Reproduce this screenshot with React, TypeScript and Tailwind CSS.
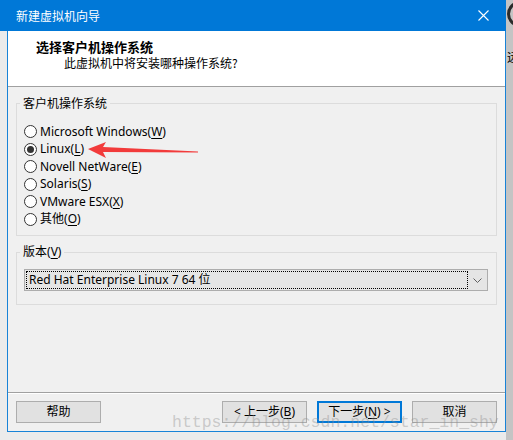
import { ReactNode } from "react";

const osList = [
  { label: "Microsoft Windows", key: "W" },
  { label: "Linux", key: "L", checked: true },
  { label: "Novell NetWare", key: "E" },
  { label: "Solaris", key: "S" },
  { label: "VMware ESX", key: "X" },
  { label: "其他", key: "O" },
];

//label with underlined access key, e.g. Linux(L)
function Mnemonic({ text, k }: { text: string; k: string }) {
  return (
    <span>
      {text}(<span className="underline underline-offset-2">{k}</span>)
    </span>
  );
}

function Radio({ label, k, checked }: { label: string; k: string; checked?: boolean }) {
  return (
    <div className="flex items-center h-[17.5px]">
      <span className="w-[13px] h-[13px] rounded-full border border-[#333] bg-white flex items-center justify-center">
        {checked && <span className="w-[7px] h-[7px] rounded-full bg-[#333]" />}
      </span>
      <span className="ml-[3px]">
        <Mnemonic text={label} k={k} />
      </span>
    </div>
  );
}

function Button({ children, primary }: { children: ReactNode; primary?: boolean }) {
  return (
    <button
      className={
        primary
          ? "w-[85px] h-[22px] bg-[#e1e1e1] border-2 border-[#0078d7] flex items-center justify-center"
          : "w-[85px] h-[22px] bg-[#e1e1e1] border border-[#adadad] flex items-center justify-center"
      }
    >
      {children}
    </button>
  );
}

export default function App() {
  return (
    <div className="relative w-[513px] h-[440px] overflow-hidden bg-[#ebebeb] text-[12px] text-black font-['Noto_Sans','Noto_Sans_CJK_SC',sans-serif]">
      <div className="flex">
        <div className="w-[506px]">
          {/* title bar */}
          <div className="h-[31px] bg-[#0078d7] flex items-center justify-between pl-4 pr-[17px] text-white">
            <span className="font-['Noto_Sans_CJK_SC',sans-serif]">新建虚拟机向导</span>
            <svg width="11" height="11" viewBox="0 0 11 11" className="mt-[-1px]">
              <path d="M0.5 0.5 L10.5 10.5 M10.5 0.5 L0.5 10.5" stroke="white" strokeWidth="1.1" />
            </svg>
          </div>

          {/* window body */}
          <div className="ml-[7px] w-[499px] h-[401px] border-x border-b border-[#1883d7] bg-[#f0f0f0] flex flex-col">
            <div className="h-[56px] bg-white border-b border-[#a0a0a0] pt-[6px] font-['Noto_Sans_CJK_SC',sans-serif]">
              <p className="ml-[28px] text-[13px] font-bold leading-[20px]">选择客户机操作系统</p>
              <p className="ml-[56px] leading-[12px]">此虚拟机中将安装哪种操作系统?</p>
            </div>

            <fieldset className="mx-[8px] mt-[8px] border border-[#dcdcdc] pl-[7px] pt-[12px] pb-[7px]">
              <legend className="-ml-[4px] px-[3px] leading-[16px] font-['Noto_Sans_CJK_SC',sans-serif]">
                客户机操作系统
              </legend>
              {osList.map((os) => (
                <Radio key={os.key} label={os.label} k={os.key} checked={os.checked} />
              ))}
            </fieldset>

            <fieldset className="mx-[8px] mt-[8px] border border-[#dcdcdc] pl-[7px] pr-[8px] pt-[9px] pb-[13px]">
              <legend className="-ml-[4px] px-[3px] leading-[16px]">
                <Mnemonic text="版本" k="V" />
              </legend>
              <div className="h-[22px] bg-[#e5e5e5] border border-[#adadad] flex items-center p-[1px]">
                <div className="flex-1 h-full border border-dotted border-black flex items-center pl-[2px]">
                  Red Hat Enterprise Linux 7 64 位
                </div>
                <div className="w-[18px] flex items-center justify-center">
                  <svg width="9" height="5" viewBox="0 0 9 5">
                    <path d="M0.5 0.5 L4.5 4.5 L8.5 0.5" stroke="#606060" fill="none" strokeWidth="1" />
                  </svg>
                </div>
              </div>
            </fieldset>

            <div className="mt-auto border-t border-[#a0a0a0]">
              <div className="border-t border-white pt-[7px] pb-[8px] px-[8px] flex font-['Noto_Sans','Noto_Sans_CJK_SC',sans-serif]">
                <Button>帮助</Button>
                <div className="ml-auto flex gap-[10px]">
                  <Button>
                    &lt; 上一步(<span className="underline underline-offset-2">B</span>)
                  </Button>
                  <Button primary>
                    下一步(<span className="underline underline-offset-2">N</span>) &gt;
                  </Button>
                  <Button>取消</Button>
                </div>
              </div>
            </div>
          </div>
        </div>

        {/* edge of the window behind */}
        <div className="relative w-[7px] h-[440px] bg-[#c4c4c4]">
          <div className="absolute left-[1px] top-[1px] w-[26px] h-[26px] rounded-full border-[3px] border-[#2b2b2b]" />
          <span className="absolute left-[1px] top-[48px] font-['Noto_Sans_CJK_SC',sans-serif]">远</span>
        </div>
      </div>

      {/* red annotation arrow */}
      <svg className="absolute left-[86px] top-[139px]" width="116" height="22" viewBox="0 0 116 22">
        <polygon points="2,10 20,3 17,8 112,12.4 112,13.6 17,13 20,19" fill="#f23b3b" />
      </svg>

      {/* blog watermark */}
      <span className="absolute left-[172px] top-[411px] text-[16.5px] text-[rgba(140,140,140,0.4)] font-['Liberation_Mono',monospace] pointer-events-none">
        https://blog.csdn.net/star_in_shy
      </span>
    </div>
  );
}
